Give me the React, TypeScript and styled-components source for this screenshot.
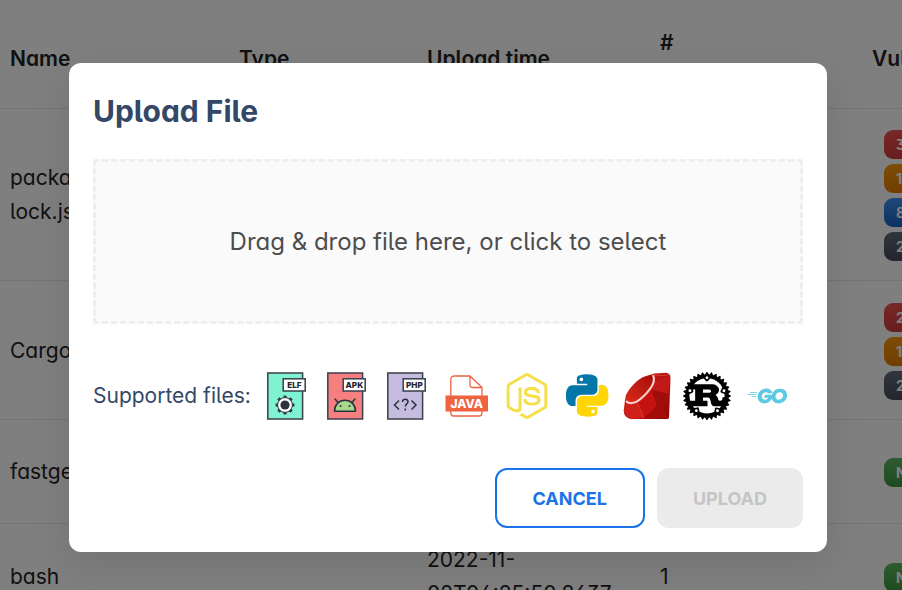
import React from "react";
import styled, { createGlobalStyle, css } from "styled-components";
import { SiNodedotjs, SiRust, SiGo } from "react-icons/si";

const GlobalStyle = createGlobalStyle`
  *, *::before, *::after { box-sizing: border-box; }
  html, body { margin: 0; height: 100%; overflow: hidden; background: #fff; }
  body, button {
    font-family: Inter, "Liberation Sans", sans-serif;
    font-feature-settings: "cv02", "cv03", "cv04", "cv05", "cv09", "cv11";
  }
`;

const Page = styled.div`
  position: relative;
  height: 100vh;
  overflow: hidden;
`;

const Table = styled.table`
  width: 1080px;
  table-layout: fixed;
  border-collapse: collapse;
  color: #222;
  font-size: 21px;
  line-height: 34px;
`;

const HeadCell = styled.th<{ $raised?: boolean }>`
  height: 108px;
  padding: 10px 10px ${(p) => (p.$raised ? "32px" : "0")};
  border-bottom: 1px solid #e8e8e8;
  font-weight: 600;
  text-align: left;
  white-space: nowrap;
`;

const Row = styled.tr<{ $height: number }>`
  height: ${(p) => p.$height}px;
`;

const Cell = styled.td`
  padding: 2px 10px 0;
  border-bottom: 1px solid #e8e8e8;
  vertical-align: middle;
`;

const BadgeStack = styled.div`
  display: flex;
  flex-direction: column;
  gap: 5px;
  padding: 1px 0 0 12px;
`;

type Tone = "red" | "orange" | "blue" | "slate" | "green";

const tones: Record<Tone, [string, string]> = {
  red: ["#ef5350", "#d23a3a"],
  orange: ["#fb9a0a", "#e07c00"],
  blue: ["#3f8ff0", "#1662c4"],
  slate: ["#626c7a", "#464c58"],
  green: ["#5cb860", "#3d9440"],
};

const Badge = styled.span<{ $tone: Tone }>`
  height: 29px;
  padding: 0 12px;
  border-radius: 9px;
  background: linear-gradient(180deg, ${(p) => tones[p.$tone][0]}, ${(p) => tones[p.$tone][1]});
  color: #fff;
  font-size: 14px;
  font-weight: 700;
  line-height: 29px;
  white-space: nowrap;
`;

const Backdrop = styled.div`
  position: absolute;
  inset: 0;
  display: flex;
  align-items: center;
  justify-content: center;
  padding: 25px 6px 0 0;
  background: rgba(0, 0, 0, 0.5);
`;

const Dialog = styled.section`
  width: calc(100% - 138px);
  padding: 24px;
  border-radius: 12px;
  background: #fff;
  box-shadow: 0 12px 40px rgba(0, 0, 0, 0.1);
`;

const Title = styled.h2`
  margin: 0 0 24px;
  color: #344767;
  font-size: 30px;
  font-weight: 700;
  line-height: 48px;
`;

const DropZone = styled.button`
  display: block;
  width: 100%;
  height: 165px;
  border: 3px dashed #eee;
  border-radius: 3px;
  background: #fafafa;
  color: #4d4d4d;
  font-size: 24px;
  cursor: pointer;
`;

const Supported = styled.div`
  display: flex;
  align-items: center;
  gap: 12px;
  margin: 48px 0;
  color: #344767;
  font-size: 21px;
  line-height: 24px;
`;

const IconList = styled.div`
  display: flex;
  gap: 12px;

  svg {
    display: block;
    width: 48px;
    height: 48px;
  }
`;

const GoIcon = styled(SiGo)`
  padding: 0 4px;
`;

const JsIcon = styled(SiNodedotjs)`
  padding: 1px;
`;

const Actions = styled.div`
  display: flex;
  justify-content: flex-end;
  gap: 12px;
`;

const ActionButton = styled.button<{ $outlined?: boolean }>`
  height: 60px;
  padding: 0 36px;
  border: 0;
  border-radius: 12px;
  font-size: 18px;
  font-weight: 700;
  ${(p) =>
    p.$outlined
      ? css`
          border: 2px solid #1a73e8;
          background: #fff;
          color: #1a73e8;
          cursor: pointer;
        `
      : css`
          background: #ebebeb;
          color: #c4c4c4;
        `}
`;

const IconText = styled.text`
  font-family: Inter, sans-serif;
  font-weight: 800;
`;

function FileIcon({ label, fill, children }: { label: string; fill: string; children: React.ReactNode }) {
  return (
    <svg viewBox="0 0 48 48" role="img" aria-label={label}>
      <rect x="4.8" y="1" width="34.8" height="46" fill={fill} stroke="#383e4b" strokeWidth="1.5" />
      {children}
      <rect x="20.2" y="6.8" width="22" height="12.2" fill="#fff" stroke="#383e4b" strokeWidth="1.5" />
      <IconText x="31.4" y="15.8" textAnchor="middle" fontSize="8.2" fill="#20242c">
        {label}
      </IconText>
    </svg>
  );
}

function ElfIcon() {
  return (
    <FileIcon label="ELF" fill="#80f4d0">
      <g stroke="#2c323d" strokeWidth="3">
        {[0, 45, 90, 135].map((a) => (
          <path key={a} d="M22 23.6v18.8" transform={`rotate(${a} 22 33)`} />
        ))}
      </g>
      <circle cx="22" cy="33" r="7.4" fill="#fff" stroke="#2c323d" strokeWidth="1" />
      <circle cx="22" cy="33" r="4.6" fill="#2c323d" />
    </FileIcon>
  );
}

function ApkIcon() {
  return (
    <FileIcon label="APK" fill="#f68080">
      <g stroke="#2c323d" strokeWidth="1.5" strokeLinecap="round">
        <path d="M15 30.500l-3-3.500M29 30.500l3-3.500" />
        <path d="M11.500 39.300c0-6.500 4.500-11 10.500-11s10.500 4.500 10.500 11z" fill="#a5d78c" strokeLinejoin="round" />
      </g>
      <circle cx="17.500" cy="34" r="1" fill="#2c323d" />
      <circle cx="26.500" cy="34" r="1" fill="#2c323d" />
    </FileIcon>
  );
}

function PhpIcon() {
  return (
    <FileIcon label="PHP" fill="#c5bcdf">
      <g fill="none" stroke="#2c323d" strokeWidth="1.5">
        <path d="M16 28.500l-4.500 4.500 4.500 4.500M28.500 28.500l4.500 4.500-4.500 4.500" />
        <path d="M19.500 30c0-1.800 1-2.800 2.700-2.800s2.800 1 2.800 2.600c0 2-2.700 2.200-2.700 4.800M22.300 36.400v2" />
      </g>
    </FileIcon>
  );
}

function JavaIcon() {
  return (
    <svg viewBox="0 0 48 48" role="img" aria-label="Java">
      <g fill="none" stroke="#ee6340" strokeWidth="1.3">
        <path d="M7.800 25V7.500a3.500 3.500 0 0 1 3.500-3.500H27l12 11.500V25M27 4v9a2.500 2.500 0 0 0 2.500 2.500H39" />
        <path d="M7.800 38v3a3 3 0 0 0 3 3H36a3 3 0 0 0 3-3v-3" />
      </g>
      <path d="M2.500 23.500h42.500v16H2.500z" fill="#ee6340" />
      <IconText x="23.7" y="36" textAnchor="middle" fontSize="12" fill="#fff">
        JAVA
      </IconText>
    </svg>
  );
}

function PythonIcon() {
  return (
    <svg viewBox="-1.7 -1.3 27.2 27.2" role="img" aria-label="Python">
      <path
        fill="#0277a8"
        d="M14.25.18l.9.2.73.26.59.3.45.32.34.34.25.34.16.33.1.3.04.26.02.2-.01.13V8.5l-.05.63-.13.55-.21.46-.26.38-.3.31-.33.25-.35.19-.35.14-.33.1-.3.07-.26.04-.21.02H8.77l-.69.05-.59.14-.5.22-.41.27-.33.32-.27.35-.2.36-.15.37-.1.35-.07.32-.04.27-.02.21v3.06H3.17l-.21-.03-.28-.07-.32-.12-.35-.18-.36-.26-.36-.36-.35-.46-.32-.59-.28-.73-.21-.88-.14-1.05-.05-1.23.06-1.22.16-1.04.24-.87.32-.71.36-.57.4-.44.42-.33.42-.24.4-.16.36-.1.32-.05.24-.01h.16l.06.01h8.16v-.83H6.18l-.01-2.75-.02-.37.05-.34.11-.31.17-.28.25-.26.31-.23.38-.2.44-.18.51-.15.58-.12.64-.1.71-.06.77-.04.84-.02 1.27.05zm-6.3 1.98l-.23.33-.08.41.08.41.23.34.33.22.41.09.41-.09.33-.22.23-.34.08-.41-.08-.41-.23-.33-.33-.22-.41-.09-.41.09z"
      />
      <path
        fill="#ffd503"
        d="M21.04 6.11l.28.06.32.12.35.18.36.27.36.35.35.47.32.59.28.73.21.88.14 1.04.05 1.23-.06 1.23-.16 1.04-.24.86-.32.71-.36.57-.4.45-.42.33-.42.24-.4.16-.36.09-.32.05-.24.02-.16-.01h-8.22v.82h5.84l.01 2.76.02.36-.05.34-.11.31-.17.29-.25.25-.31.24-.38.2-.44.17-.51.15-.58.13-.64.09-.71.07-.77.04-.84.01-1.27-.04-1.07-.14-.9-.2-.73-.25-.59-.3-.45-.33-.34-.34-.25-.34-.16-.33-.1-.3-.04-.25-.02-.2.01-.13v-5.34l.05-.64.13-.54.21-.46.26-.38.3-.32.33-.24.35-.2.35-.14.33-.1.3-.06.26-.04.21-.02.13-.01h5.84l.69-.05.59-.14.5-.21.41-.28.33-.32.27-.35.2-.36.15-.36.1-.35.07-.32.04-.28.02-.21V6.07h2.09l.14.01zm-6.47 14.25l-.23.33-.08.41.08.41.23.33.33.23.41.08.41-.08.33-.23.23-.33.08-.41-.08-.41-.23-.33-.33-.23-.41-.08-.41.08z"
      />
    </svg>
  );
}

function RubyIcon() {
  return (
    <svg viewBox="0 0 48 48" role="img" aria-label="Ruby">
      <defs>
        <linearGradient id="rubyBody" x1="0" y1="0" x2="1" y2="1">
          <stop offset="0" stopColor="#d92a1c" />
          <stop offset="0.5" stopColor="#b51210" />
          <stop offset="1" stopColor="#8d0808" />
        </linearGradient>
        <linearGradient id="rubyTop" x1="1" y1="0" x2="0" y2="1">
          <stop offset="0" stopColor="#a40d08" />
          <stop offset="1" stopColor="#dc2c1c" />
        </linearGradient>
      </defs>
      <path d="M31 1.500L43 .8Q47.500 1 47.500 6L46 45.500Q46 47 43 47H8Q1 46 .8 38.500L2 28Q14 6 31 1.500z" fill="url(#rubyBody)" />
      <path d="M3 32L14 30 21 46 9 47Q1 46 .8 38.500z" fill="#cf2019" />
      <path d="M14 30L29 18 34 34 21 46z" fill="#c3120f" />
      <path d="M29 18L46 22 34 34z" fill="#9e0c0c" />
      <path d="M34 34L46 46 21 46z" fill="#a50b0b" />
      <path d="M31 10L47 4 46 22 29 18z" fill="#c01917" />
      <path d="M30 3Q20 2 10 13T3 29q3 4 11 .5T27 17Q33 9 30 3z" fill="url(#rubyTop)" />
      <path d="M30 3q3 6-3 14T14 29.500Q6 33 3 29" fill="none" stroke="#f6a9a2" strokeWidth="2.2" />
      <path d="M30 3q3 6-3 14T14 29.500Q6 33 3 29" fill="none" stroke="#fff1ee" strokeWidth="1" />
      <path d="M30 3q8 1 16 0M14 30l7 16" fill="none" stroke="#e5554d" strokeWidth="0.6" />
    </svg>
  );
}

export default function App() {
  return (
    <Page>
      <GlobalStyle />
      <Table>
        <colgroup>
          <col width="229" />
          <col width="188" />
          <col width="233" />
          <col width="212" />
          <col width="218" />
        </colgroup>
        <thead>
          <tr>
            <HeadCell>Name</HeadCell>
            <HeadCell>Type</HeadCell>
            <HeadCell>Upload time</HeadCell>
            <HeadCell $raised>#</HeadCell>
            <HeadCell>Vulnerabilities</HeadCell>
          </tr>
        </thead>
        <tbody>
          <Row $height={172}>
            <Cell>package-<br />lock.json</Cell>
            <Cell />
            <Cell />
            <Cell />
            <Cell>
              <BadgeStack>
                <Badge $tone="red">3</Badge>
                <Badge $tone="orange">1</Badge>
                <Badge $tone="blue">8</Badge>
                <Badge $tone="slate">2</Badge>
              </BadgeStack>
            </Cell>
          </Row>
          <Row $height={139}>
            <Cell>Cargo.lock</Cell>
            <Cell />
            <Cell />
            <Cell />
            <Cell>
              <BadgeStack>
                <Badge $tone="red">2</Badge>
                <Badge $tone="orange">1</Badge>
                <Badge $tone="slate">2</Badge>
              </BadgeStack>
            </Cell>
          </Row>
          <Row $height={104}>
            <Cell>fastgey</Cell>
            <Cell />
            <Cell />
            <Cell />
            <Cell>
              <BadgeStack>
                <Badge $tone="green">None</Badge>
              </BadgeStack>
            </Cell>
          </Row>
          <Row $height={106}>
            <Cell>bash</Cell>
            <Cell />
            <Cell>2022-11-<br />02T04:25:50.8637</Cell>
            <Cell>1</Cell>
            <Cell>
              <BadgeStack>
                <Badge $tone="green">None</Badge>
              </BadgeStack>
            </Cell>
          </Row>
        </tbody>
      </Table>
      <Backdrop>
        <Dialog role="dialog" aria-modal="true" aria-labelledby="upload-title">
          <Title id="upload-title">Upload File</Title>
          <DropZone type="button">Drag &amp; drop file here, or click to select</DropZone>
          <Supported>
            <span>Supported files:</span>
            <IconList>
              <ElfIcon />
              <ApkIcon />
              <PhpIcon />
              <JavaIcon />
              <JsIcon color="#f5e04b" role="img" aria-label="JavaScript" />
              <PythonIcon />
              <RubyIcon />
              <SiRust color="#000" role="img" aria-label="Rust" />
              <GoIcon color="#5dc9e2" role="img" aria-label="Go" />
            </IconList>
          </Supported>
          <Actions>
            <ActionButton type="button" $outlined>CANCEL</ActionButton>
            <ActionButton type="button" disabled>UPLOAD</ActionButton>
          </Actions>
        </Dialog>
      </Backdrop>
    </Page>
  );
}
